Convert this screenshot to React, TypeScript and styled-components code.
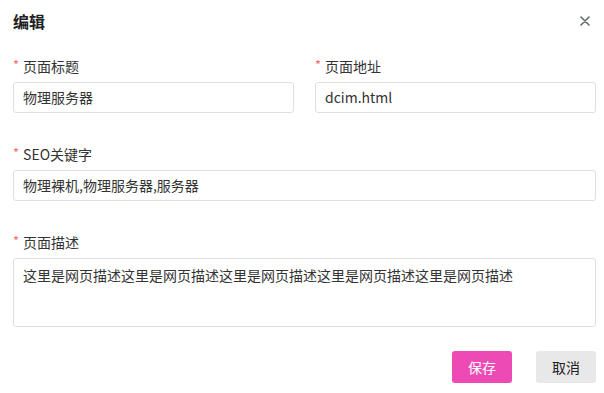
import React from "react";
import styled, { createGlobalStyle } from "styled-components";

const Global = createGlobalStyle`
  html, body { margin: 0; padding: 0; background: #fff; }
  body { font-family: "Noto Sans CJK SC", "Noto Sans", sans-serif; color: #333; }
  * { box-sizing: border-box; }
`;

const Dialog = styled.div`
  width: 604px;
  height: 393px;
  background: #fff;
  padding: 0 8px 0 13px;
  display: flex;
  flex-direction: column;
`;

const Header = styled.div`
  height: 56px;
  flex-shrink: 0;
  padding-top: 9px;
  display: flex;
  justify-content: space-between;
  align-items: flex-start;
`;

const Title = styled.div`
  font-size: 16px;
  font-weight: 700;
  line-height: 24px;
  color: #222;
`;

const Close = styled.button`
  border: 0;
  background: none;
  padding: 0;
  margin: 7px 6px 0 0;
  width: 10px;
  height: 10px;
  display: flex;
  cursor: pointer;
`;

const Row = styled.div`
  display: grid;
  grid-template-columns: 1fr 1fr;
  column-gap: 21px;
`;

const Item = styled.div<{ $mb?: number }>`
  display: flex;
  flex-direction: column;
  margin-bottom: ${(p) => p.$mb ?? 31}px;
`;

const Label = styled.label`
  font-size: 14px;
  line-height: 20px;
  height: 20px;
  margin-bottom: 6px;
  color: #333;
  display: flex;
  align-items: center;
`;

const Star = styled.span`
  color: #f56c6c;
  font-size: 13px;
  margin-right: 4px;
  margin-top: -2px;
`;

const Input = styled.div`
  height: 31px;
  border: 1px solid #dcdfe6;
  border-radius: 3px;
  padding: 0 9px;
  font-size: 14px;
  line-height: 29px;
  color: #333;
`;

const TextArea = styled.div`
  height: 69px;
  border: 1px solid #dcdfe6;
  border-radius: 3px;
  padding: 5px 9px;
  font-size: 14px;
  line-height: 22px;
  color: #333;
`;

const Footer = styled.div`
  display: flex;
  justify-content: flex-end;
  gap: 24px;
  margin-top: 24px;
`;

const Button = styled.button<{ $primary?: boolean }>`
  width: 60px;
  height: 32px;
  border: 0;
  border-radius: 3px;
  font-family: inherit;
  font-size: 14px;
  background: ${(p) => (p.$primary ? "#ed4ab6" : "#e8e8e8")};
  color: ${(p) => (p.$primary ? "#fff" : "#222")};
  cursor: pointer;
`;

const Field: React.FC<{ label: string; children: React.ReactNode; mb?: number }> = ({ label, children, mb }) => (
  <Item $mb={mb}>
    <Label>
      <Star>*</Star>
      {label}
    </Label>
    {children}
  </Item>
);

export default function App() {
  return (
    <>
      <Global />
      <Dialog>
        <Header>
          <Title>编辑</Title>
          <Close aria-label="close">
            <svg width="10" height="10" viewBox="0 0 10 10">
              <path d="M1 1 L9 9 M9 1 L1 9" stroke="#5f6b6b" strokeWidth="1.6" strokeLinecap="round" />
            </svg>
          </Close>
        </Header>
        <Row>
          <Field label="页面标题">
            <Input>物理服务器</Input>
          </Field>
          <Field label="页面地址">
            <Input>dcim.html</Input>
          </Field>
        </Row>
        <Field label="SEO关键字">
          <Input>物理裸机,物理服务器,服务器</Input>
        </Field>
        <Field label="页面描述" mb={0}>
          <TextArea>这里是网页描述这里是网页描述这里是网页描述这里是网页描述这里是网页描述</TextArea>
        </Field>
        <Footer>
          <Button $primary>保存</Button>
          <Button>取消</Button>
        </Footer>
      </Dialog>
    </>
  );
}
